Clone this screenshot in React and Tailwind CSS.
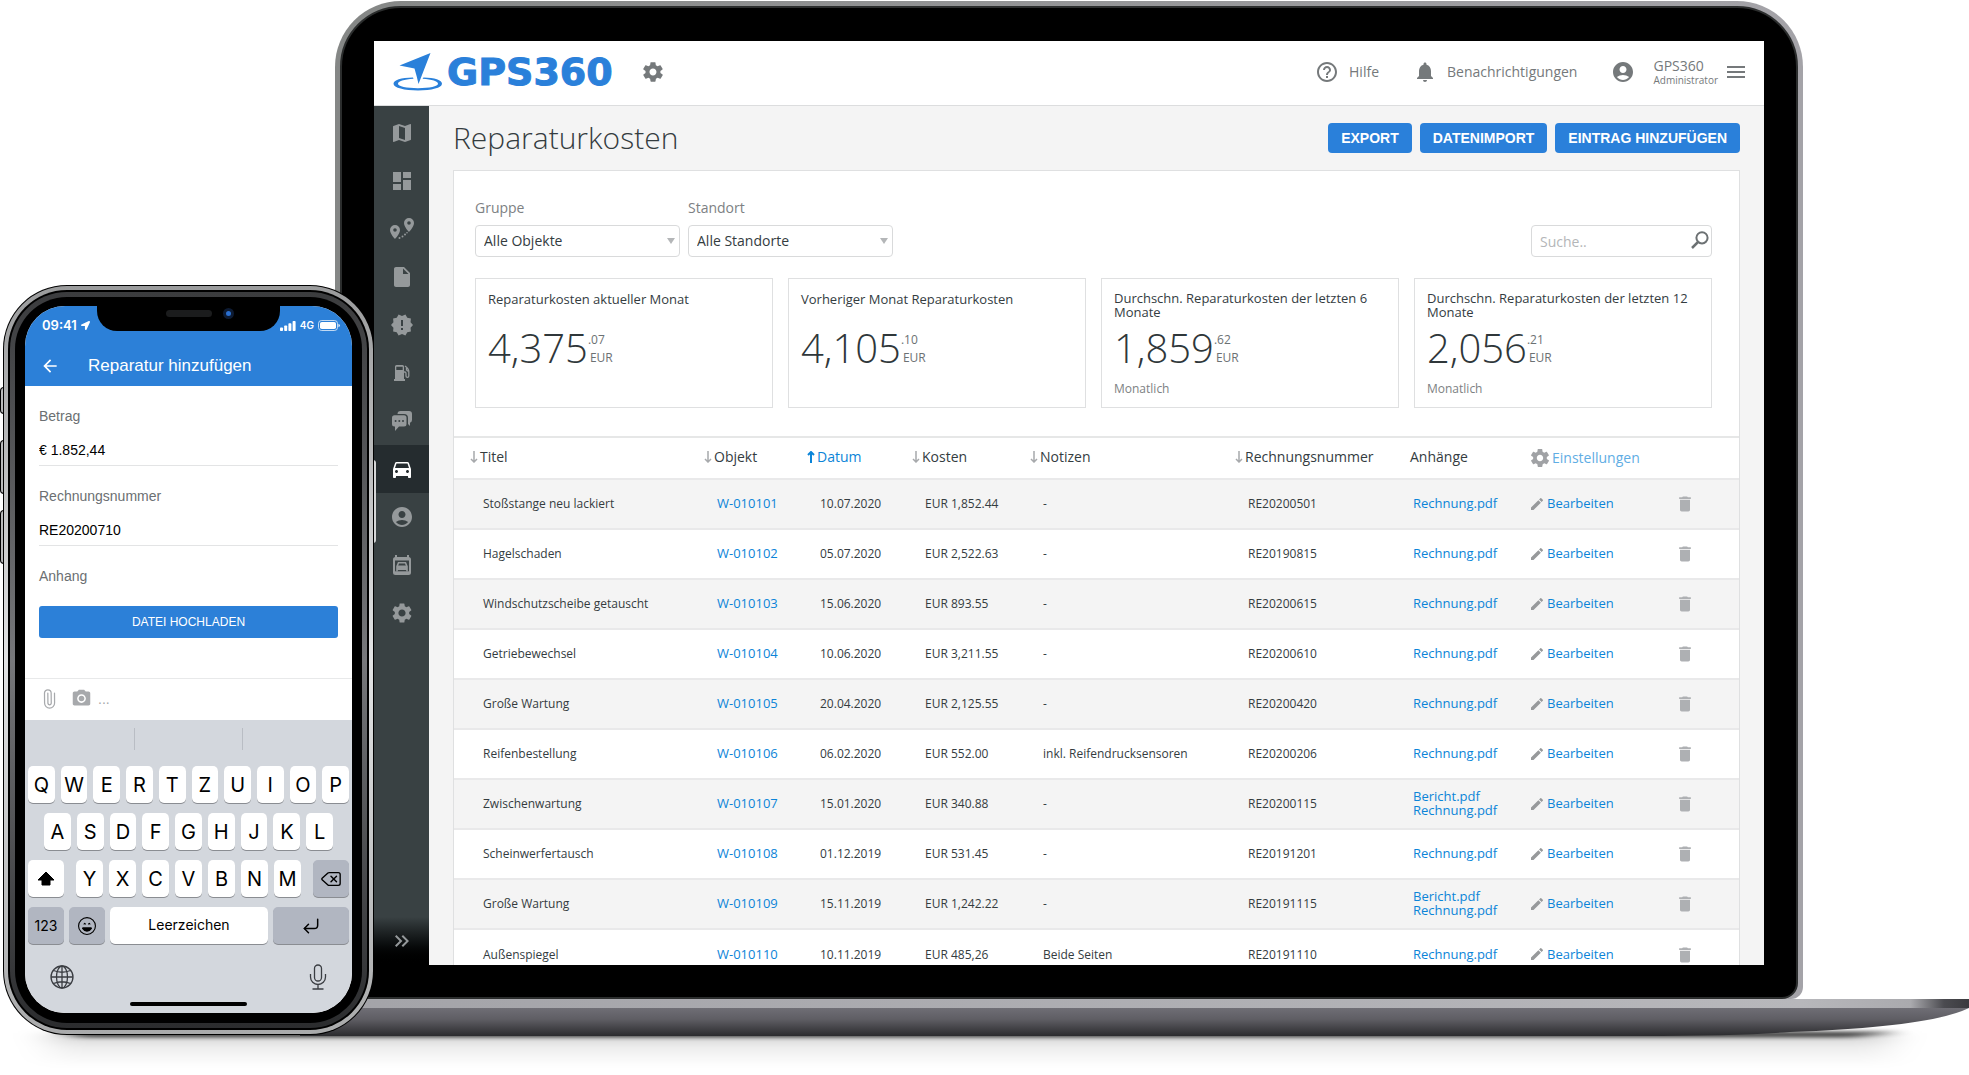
import React, { useState } from 'react'
import {
    MdAccountCircle,
    MdArrowBack,
    MdCameraAlt,
    MdDashboard,
    MdDelete,
    MdDirectionsCar,
    MdEdit,
    MdHelpOutline,
    MdInsertDriveFile,
    MdKeyboardDoubleArrowRight,
    MdMap,
    MdMenu,
    MdNewReleases,
    MdNotifications,
    MdSettings
} from 'react-icons/md'
import { IoMdSettings } from 'react-icons/io'
import { FaLocationArrow } from 'react-icons/fa'
import { BsEmojiLaughing } from 'react-icons/bs'
import { CornerDownLeft, Delete, Paperclip } from 'lucide-react'

const RouteIcon = () => (
    <svg viewBox="0 0 24 22" className="h-[22px] w-6" fill="currentColor">
        <path fillRule="evenodd" d="M5 7a5 5 0 0 1 5 5c0 3.700-5 9-5 9s-5-5.300-5-9a5 5 0 0 1 5-5zm0 3.200a1.800 1.800 0 1 0 0 3.600 1.800 1.800 0 0 0 0-3.600z" />
        <path fillRule="evenodd" d="M19 0a5 5 0 0 1 5 5c0 3.700-5 9-5 9s-5-5.300-5-9a5 5 0 0 1 5-5zm0 3.200a1.800 1.800 0 1 0 0 3.600 1.800 1.800 0 0 0 0-3.600z" />
        <circle cx="9.500" cy="20" r="1" />
        <circle cx="12.500" cy="18.500" r="1" />
        <circle cx="15" cy="16.500" r="1" />
        <circle cx="17" cy="14.800" r=".8" />
    </svg>
)

const FuelIcon = () => (
    <svg viewBox="0 0 16 16" className="size-4" fill="none" stroke="currentColor">
        <path fill="currentColor" stroke="none" fillRule="evenodd" d="M1 1.500A1.500 1.500 0 0 1 2.500 0h6A1.500 1.500 0 0 1 10 1.500V14h1v2H0v-2h1zM2.300 1.700V5h6.400V1.700z" />
        <path strokeWidth="1.300" d="M10 7h.8q1.200 0 1.200 1.200V11a1.400 1.400 0 0 0 2.800 0V6.500Q14.800 4 11 1" />
        <path strokeWidth="1.300" d="M12.500 2.800V5l2 1.500" />
    </svg>
)

const ChatIcon = () => (
    <svg viewBox="0 0 20 20" className="size-5" fill="currentColor">
        <path d="M5.500 3a3 3 0 0 1 3-3H17a3 3 0 0 1 3 3v6a3 3 0 0 1-2 2.800V15l-2-2V7a4 4 0 0 0-4-4z" />
        <path fillRule="evenodd" d="M2.500 4.200h9.500A2.500 2.500 0 0 1 14.500 6.700v6.300a2.500 2.500 0 0 1-2.500 2.500H7L3 20v-4.500h-.5A2.500 2.500 0 0 1 0 13V6.700a2.500 2.500 0 0 1 2.500-2.500zM3.600 9a1 1 0 1 0 0 2 1 1 0 0 0 0-2zm3.700 0a1 1 0 1 0 0 2 1 1 0 0 0 0-2zM11 9a1 1 0 1 0 0 2 1 1 0 0 0 0-2z" />
    </svg>
)

const ServiceIcon = () => (
    <svg viewBox="0 0 18 20" className="h-5 w-[18px]" fill="none" stroke="currentColor" strokeWidth="2">
        <path d="M3 0v4M15 0v4" />
        <rect x="1" y="3" width="16" height="16" rx="1.500" />
        <path strokeWidth="3" d="M2 4h14" />
        <path strokeWidth="3" d="M2 17.800h14" />
        <path strokeWidth="1.600" d="M4 16.500v-5L5.500 7.800h7L14 11.500v5" />
        <path fill="currentColor" stroke="none" d="M4 10.500h10V15H4z" />
    </svg>
)

const SearchIcon = () => (
    <svg viewBox="0 0 18 18" className="size-[18px]" fill="none" stroke="currentColor" strokeWidth="2">
        <circle cx="11" cy="6.800" r="5.600" />
        <path d="M7 11L1 17" strokeWidth="2.500" />
    </svg>
)

const SortIcon = ({ up }) => (
    <svg viewBox="0 0 8 12" className={up ? 'h-3 w-2 rotate-180 text-[#0b84d8]' : 'h-3 w-2 text-[#a7a9ac]'} fill="none" stroke="currentColor" strokeWidth={up ? 2 : 1.5}>
        <path d="M4 0v11M1 8l3 3 3-3" />
    </svg>
)

const GlobeIcon = () => (
    <svg viewBox="0 0 24 24" className="size-6" fill="none" stroke="currentColor" strokeWidth="1.300">
        <circle cx="12" cy="12" r="11" />
        <ellipse cx="12" cy="12" rx="5.500" ry="11" />
        <path d="M12 1v22M1 12h22M3.500 5.500Q12 9 20.500 5.500M3.500 18.500Q12 15 20.500 18.500" />
    </svg>
)

const MicIcon = () => (
    <svg viewBox="0 0 18 26" className="h-[26px] w-[18px]" fill="none" stroke="currentColor" strokeWidth="1.300">
        <rect x="5.500" y="1" width="7" height="16" rx="3.500" />
        <path d="M1.500 10v3a7.500 7.500 0 0 0 15 0v-3M9 20.500V25M3.500 25h11" />
    </svg>
)

const ShiftIcon = () => (
    <svg viewBox="0 0 18 15" className="h-[15px] w-[18px]" fill="currentColor" stroke="currentColor" strokeLinejoin="round">
        <path d="M9 1l8 8h-4v5H5V9H1z" />
    </svg>
)

const Logo = () => (
    <a href="#" className="flex items-center gap-1 text-[#2a80da]">
        <svg viewBox="0 0 50 38" className="h-[38px] w-[50px]" fill="currentColor">
            <path d="M37.500 0L25.500 31Q24 24 21.500 15.500L6.500 12.500z" />
            <path d="M20.500 25.800C11 26.300 5 28.400 5 30.800c0 2.800 8.500 4.400 20 4.400s20-1.600 20-4.400c0-2.400-6-4.500-15.500-5l1-1.300C41.500 24.800 49 27 49 30.800c0 4-10.500 6.700-24 6.700S.5 34.800.5 30.800c0-3.800 7.500-6 19.500-6.300z" />
        </svg>
        <span className="font-['DejaVu_Sans',sans-serif] text-[38px] leading-9 font-bold [-webkit-text-stroke:1px_#2a80da]">GPS360</span>
    </a>
)

const menu = [
    { name: 'Karte', icon: <MdMap className="size-6" /> },
    { name: 'Dashboard', icon: <MdDashboard className="size-6" /> },
    { name: 'Routen', icon: <RouteIcon /> },
    { name: 'Berichte', icon: <MdInsertDriveFile className="size-6" /> },
    { name: 'Ereignisse', icon: <MdNewReleases className="size-6" /> },
    { name: 'Kraftstoff', icon: <FuelIcon /> },
    { name: 'Nachrichten', icon: <ChatIcon /> },
    { name: 'Fahrzeuge', icon: <MdDirectionsCar className="size-6" />, active: true },
    { name: 'Fahrer', icon: <MdAccountCircle className="size-6" /> },
    { name: 'Service', icon: <ServiceIcon /> },
    { name: 'Einstellungen', icon: <MdSettings className="size-6" /> }
]

const stats = [
    { title: 'Reparaturkosten aktueller Monat', value: '4,375', cents: '.07' },
    { title: 'Vorheriger Monat Reparaturkosten', value: '4,105', cents: '.10' },
    { title: 'Durchschn. Reparaturkosten der letzten 6 Monate', value: '1,859', cents: '.62', note: 'Monatlich' },
    { title: 'Durchschn. Reparaturkosten der letzten 12 Monate', value: '2,056', cents: '.21', note: 'Monatlich' }
]

const repairs = [
    { titel: 'Stoßstange neu lackiert', objekt: 'W-010101', datum: '10.07.2020', kosten: 'EUR 1,852.44', notizen: '-', nummer: 'RE20200501', files: ['Rechnung.pdf'] },
    { titel: 'Hagelschaden', objekt: 'W-010102', datum: '05.07.2020', kosten: 'EUR 2,522.63', notizen: '-', nummer: 'RE20190815', files: ['Rechnung.pdf'] },
    { titel: 'Windschutzscheibe getauscht', objekt: 'W-010103', datum: '15.06.2020', kosten: 'EUR 893.55', notizen: '-', nummer: 'RE20200615', files: ['Rechnung.pdf'] },
    { titel: 'Getriebewechsel', objekt: 'W-010104', datum: '10.06.2020', kosten: 'EUR 3,211.55', notizen: '-', nummer: 'RE20200610', files: ['Rechnung.pdf'] },
    { titel: 'Große Wartung', objekt: 'W-010105', datum: '20.04.2020', kosten: 'EUR 2,125.55', notizen: '-', nummer: 'RE20200420', files: ['Rechnung.pdf'] },
    { titel: 'Reifenbestellung', objekt: 'W-010106', datum: '06.02.2020', kosten: 'EUR 552.00', notizen: 'inkl. Reifendrucksensoren', nummer: 'RE20200206', files: ['Rechnung.pdf'] },
    { titel: 'Zwischenwartung', objekt: 'W-010107', datum: '15.01.2020', kosten: 'EUR 340.88', notizen: '-', nummer: 'RE20200115', files: ['Bericht.pdf', 'Rechnung.pdf'] },
    { titel: 'Scheinwerfertausch', objekt: 'W-010108', datum: '01.12.2019', kosten: 'EUR 531.45', notizen: '-', nummer: 'RE20191201', files: ['Rechnung.pdf'] },
    { titel: 'Große Wartung', objekt: 'W-010109', datum: '15.11.2019', kosten: 'EUR 1,242.22', notizen: '-', nummer: 'RE20191115', files: ['Bericht.pdf', 'Rechnung.pdf'] },
    { titel: 'Außenspiegel', objekt: 'W-010110', datum: '10.11.2019', kosten: 'EUR 485,26', notizen: 'Beide Seiten', nummer: 'RE20191110', files: ['Rechnung.pdf'] }
]

const Header = () => (
    <header className="flex h-[65px] shrink-0 items-center border-b border-[#dcddde] bg-white pr-4 pb-0.5 pl-[19px] text-sm text-[#75797b]">
        <Logo />
        <button type="button" aria-label="Optionen" className="ml-7">
            <IoMdSettings className="size-6" />
        </button>
        <a href="#" className="ml-auto flex items-center gap-2.5">
            <MdHelpOutline className="size-6" />
            Hilfe
        </a>
        <a href="#" className="ml-[34px] flex items-center gap-2.5">
            <MdNotifications className="size-6" />
            Benachrichtigungen
        </a>
        <div className="ml-[34px] flex items-center gap-[18px]">
            <MdAccountCircle className="size-6" />
            <div>
                <p className="leading-4">GPS360</p>
                <p className="text-[10px] leading-3 font-medium">Administrator</p>
            </div>
        </div>
        <button type="button" aria-label="Menü" className="ml-1.5">
            <MdMenu className="size-6" />
        </button>
    </header>
)

const Sidebar = () => (
    <nav className="relative flex w-[55px] shrink-0 flex-col bg-[#394143] pt-[3px] text-[#95999b]">
        {menu.map((item) => (
            <a
                key={item.name}
                href="#"
                aria-label={item.name}
                className={item.active
                    ? 'flex h-12 items-center justify-center bg-[#252c2f] text-white'
                    : 'flex h-12 items-center justify-center'}
            >
                {item.icon}
            </a>
        ))}
        <button type="button" aria-label="Ausklappen" className="mt-auto flex h-12 items-center justify-center bg-linear-to-b from-[#394143] to-black">
            <MdKeyboardDoubleArrowRight className="size-6" />
        </button>
    </nav>
)

const Filter = ({ id, label, option }) => (
    <div>
        <label htmlFor={id} className="block text-sm leading-5 text-[#7d8183]">{label}</label>
        <div className="relative mt-[7px]">
            <select id={id} className="h-8 w-[205px] appearance-none rounded-sm border border-[#d9dadb] bg-white px-2 text-sm font-medium text-[#343c3f]">
                <option>{option}</option>
            </select>
            <svg viewBox="0 0 8 6" className="pointer-events-none absolute top-[13px] right-[5px] h-1.5 w-2" fill="#b4b6b8">
                <path d="M0 0h8L4 6z" />
            </svg>
        </div>
    </div>
)

const StatCard = ({ title, value, cents, note }) => (
    <div className="h-[130px] border border-[#dfe0e1] px-3 pt-3">
        <h2 className="h-[30px] text-[13px] leading-[14px]">
            <span className={note ? 'block' : 'block pt-px'}>{title}</span>
        </h2>
        <div className="mt-1 flex text-[#2f373a]">
            <span className="text-[40px] leading-[46px] font-light">{value}</span>
            <span className="flex flex-col pt-1.5 text-xs leading-[18px] text-[#6c7173]">
                <span>{cents}</span>
                <span className="pl-0.5">EUR</span>
            </span>
        </div>
        {note && <p className="mt-2.5 text-xs leading-4 font-medium text-[#7d8183]">{note}</p>}
    </div>
)

const SortHead = ({ children, up }) => (
    <th className="p-0 pb-[3px] font-medium">
        <button type="button" className={up ? 'flex items-center gap-0.5 text-[#0b84d8]' : 'flex items-center gap-0.5'}>
            <SortIcon up={up} />
            {children}
        </button>
    </th>
)

const RepairTable = () => (
    <table className="w-full table-fixed border-t-2 border-[#e6e7e7] text-left text-xs font-medium">
        <colgroup>
            <col className="w-[16px]" />
            <col className="w-[234px]" />
            <col className="w-[103px]" />
            <col className="w-[105px]" />
            <col className="w-[118px]" />
            <col className="w-[205px]" />
            <col className="w-[165px]" />
            <col className="w-[129px]" />
            <col className="w-[141px]" />
            <col className="w-[69px]" />
        </colgroup>
        <thead>
            <tr className="h-[42px] text-sm">
                <td />
                <SortHead>Titel</SortHead>
                <SortHead>Objekt</SortHead>
                <SortHead up>Datum</SortHead>
                <SortHead>Kosten</SortHead>
                <SortHead>Notizen</SortHead>
                <SortHead>Rechnungsnummer</SortHead>
                <th className="pb-[3px] pl-2.5 font-medium">Anhänge</th>
                <th className="p-0 font-normal">
                    <a href="#" className="flex items-center gap-px text-[#5fade4]">
                        <IoMdSettings className="size-[22px] text-[#a0a2a5]" />
                        Einstellungen
                    </a>
                </th>
                <td />
            </tr>
        </thead>
        <tbody>
            {repairs.map((row) => (
                <tr key={row.objekt} className="h-[50px] border-t-2 border-[#e9e9ea] odd:bg-[#f4f4f4]">
                    <td />
                    <td className="pl-[13px]">{row.titel}</td>
                    <td className="pl-[13px] text-[13px]"><a href="#" className="text-[#0b84d8]">{row.objekt}</a></td>
                    <td className="pl-[13px]">{row.datum}</td>
                    <td className="pl-[13px]">{row.kosten}</td>
                    <td className="pl-[13px]">{row.notizen}</td>
                    <td className="pl-[13px]">{row.nummer}</td>
                    <td className="pb-0.5 pl-[13px] text-[13px] leading-[14px]">
                        {row.files.map((file) => (
                            <a key={file} href="#" className="block text-[#0b84d8]">{file}</a>
                        ))}
                    </td>
                    <td className="text-[13px]">
                        <a href="#" className="flex items-center gap-0.5 text-[#0b84d8]">
                            <MdEdit className="size-4 text-[#97999b]" />
                            Bearbeiten
                        </a>
                    </td>
                    <td>
                        <button type="button" aria-label="Löschen" className="flex pl-[5px] text-[#aeb0b3]">
                            <MdDelete className="size-5" />
                        </button>
                    </td>
                </tr>
            ))}
        </tbody>
    </table>
)

const Dashboard = () => {
    const [search, setSearch] = useState('')

    return (
        <div className="flex min-h-0 flex-1 flex-col overflow-hidden bg-[#f4f4f4] font-['Open_Sans',sans-serif] text-[#343c3f]">
            <Header />
            <div className="flex min-h-0 flex-1">
                <Sidebar />
                <main className="min-w-0 flex-1 overflow-hidden px-6">
                    <div className="flex h-16 items-center justify-between">
                        <h1 className="text-3xl font-light">Reparaturkosten</h1>
                        <div className="flex gap-2 font-['Liberation_Sans',sans-serif] text-sm font-bold text-white">
                            <button type="button" className="h-[30px] rounded-sm bg-[#2a80da] px-[13px]">EXPORT</button>
                            <button type="button" className="h-[30px] rounded-sm bg-[#2a80da] px-[13px]">DATENIMPORT</button>
                            <button type="button" className="h-[30px] rounded-sm bg-[#2a80da] px-[13px]">EINTRAG HINZUFÜGEN</button>
                        </div>
                    </div>

                    <section className="border border-[#dfe0e1] bg-white">
                        <div className="flex items-end gap-2 px-[21px] pt-[27px]">
                            <Filter id="gruppe" label="Gruppe" option="Alle Objekte" />
                            <Filter id="standort" label="Standort" option="Alle Standorte" />
                            <label className="relative mr-1.5 ml-auto">
                                <input
                                    type="text"
                                    aria-label="Suche"
                                    placeholder="Suche.."
                                    value={search}
                                    onChange={(e) => setSearch(e.target.value)}
                                    className="block h-8 w-[181px] rounded-sm border border-[#d9dadb] px-2 text-sm placeholder:text-[#b4b6b8]"
                                />
                                <span className="absolute top-[6px] right-[3px] text-[#6c7173]"><SearchIcon /></span>
                            </label>
                        </div>
                        <div className="grid grid-cols-4 gap-[15px] pt-[21px] pr-[27px] pb-7 pl-[21px]">
                            {stats.map((stat) => <StatCard key={stat.title} {...stat} />)}
                        </div>
                        <RepairTable />
                    </section>
                </main>
            </div>
        </div>
    )
}

const LaptopBase = () => (
    <svg viewBox="0 0 1969 76" preserveAspectRatio="none" className="h-[76px] w-full shrink-0">
        <defs>
            <linearGradient id="edge" x1="0" x2="1">
                <stop offset="0" stopColor="#a3a3a8" />
                <stop offset=".9" stopColor="#b7b7bb" />
                <stop offset=".965" stopColor="#aaaaae" />
                <stop offset=".985" stopColor="#4b4b50" />
                <stop offset="1" stopColor="#3a3a3e" />
            </linearGradient>
            <linearGradient id="body" x1="0" x2="0" y1="0" y2="1">
                <stop offset="0" stopColor="#6f6e75" />
                <stop offset=".4" stopColor="#5f5e64" />
                <stop offset="1" stopColor="#2b2b2e" />
            </linearGradient>
            <linearGradient id="shade" x1="0" x2="0" y1="0" y2="1">
                <stop offset="0" stopColor="#000" stopOpacity=".2" />
                <stop offset=".4" stopColor="#000" stopOpacity=".07" />
                <stop offset="1" stopColor="#000" stopOpacity="0" />
            </linearGradient>
            <filter id="soft" x="-5%" width="110%" y="-100%" height="300%">
                <feGaussianBlur stdDeviation="10 2" />
            </filter>
            <filter id="wide" x="-5%" width="110%" y="-50%" height="200%">
                <feGaussianBlur stdDeviation="18 3" />
            </filter>
        </defs>
        <path d="M50 34H1890V68H50z" fill="url(#shade)" filter="url(#wide)" />
        <path d="M60 33H1900L1850 38H80z" fill="#000" opacity=".8" filter="url(#soft)" />
        <path d="M300 9H1969Q1930 28 1790 33Q1740 37 1640 37H300z" fill="url(#body)" />
        <path d="M300 0H1969V9H300z" fill="url(#edge)" />
    </svg>
)

const Laptop = () => (
    <div className="flex h-full flex-col pt-px">
        <div className="mr-[166px] ml-[335px] flex min-h-0 flex-1 flex-col rounded-t-[66px] rounded-b-xl bg-linear-to-r from-[#858786] to-[#a4a3a8] px-[5px] pt-[5px]">
            <div className="flex min-h-0 flex-1 flex-col rounded-t-[61px] rounded-b-2xl border-2 border-[#2b2d2d] bg-black px-8 pt-[33px] pb-8">
                <Dashboard />
            </div>
        </div>
        <LaptopBase />
    </div>
)

const Key = ({ children }) => (
    <button type="button" className="flex h-[37px] min-w-0 flex-1 items-center justify-center rounded-[5px] bg-white text-xl shadow-[0_1px_0_#8a8d92]">
        {children}
    </button>
)

const Keyboard = () => (
    <div className="flex flex-1 flex-col bg-[#d3d7dd] px-[3px] font-['Inter',sans-serif] text-black">
        <div className="flex h-[46px] pt-2 pb-4">
            <span className="flex-1 border-r border-[#b9bdc4]" />
            <span className="flex-1 border-r border-[#b9bdc4]" />
            <span className="flex-1" />
        </div>
        <div className="flex flex-col gap-[10px]">
            <div className="flex gap-[6px]">
                {[...'QWERTZUIOP'].map((letter) => <Key key={letter}>{letter}</Key>)}
            </div>
            <div className="flex gap-[6px] px-4">
                {[...'ASDFGHJKL'].map((letter) => <Key key={letter}>{letter}</Key>)}
            </div>
            <div className="flex gap-3">
                <button type="button" aria-label="Umschalten" className="flex h-[37px] w-9 items-center justify-center rounded-[5px] bg-white shadow-[0_1px_0_#8a8d92]">
                    <ShiftIcon />
                </button>
                <div className="flex flex-1 gap-[6px]">
                    {[...'YXCVBNM'].map((letter) => <Key key={letter}>{letter}</Key>)}
                </div>
                <button type="button" aria-label="Löschen" className="flex h-[37px] w-9 items-center justify-center rounded-[5px] bg-[#b1b6c1] shadow-[0_1px_0_#8a8d92]">
                    <Delete className="size-[22px]" strokeWidth={1.5} />
                </button>
            </div>
            <div className="flex gap-[5px]">
                <button type="button" className="h-[37px] w-9 rounded-[5px] bg-[#b1b6c1] text-sm shadow-[0_1px_0_#8a8d92]">123</button>
                <button type="button" aria-label="Emoji" className="flex h-[37px] w-9 items-center justify-center rounded-[5px] bg-[#b1b6c1] shadow-[0_1px_0_#8a8d92]">
                    <BsEmojiLaughing className="size-[18px]" />
                </button>
                <button type="button" className="h-[37px] flex-1 rounded-[5px] bg-white pb-0.5 text-sm shadow-[0_1px_0_#8a8d92]">Leerzeichen</button>
                <button type="button" aria-label="Eingabe" className="flex h-[37px] w-[76px] items-center justify-center rounded-[5px] bg-[#b1b6c1] shadow-[0_1px_0_#8a8d92]">
                    <CornerDownLeft className="size-5" strokeWidth={1.8} />
                </button>
            </div>
        </div>
        <div className="flex items-center justify-between px-[22px] pt-5 text-[#3a3d42]">
            <GlobeIcon />
            <MicIcon />
        </div>
        <div className="mx-auto mt-auto mb-[7px] h-1 w-[117px] rounded-full bg-black" />
    </div>
)

const PhoneScreen = () => {
    const [betrag, setBetrag] = useState('€ 1.852,44')
    const [nummer, setNummer] = useState('RE20200710')

    return (
        <div className="relative flex h-full flex-col overflow-hidden rounded-[40px] bg-white font-['Liberation_Sans',sans-serif]">
            {/* Notch */}
            <div className="absolute top-0 left-[72px] h-[25px] w-[183px] rounded-b-[20px] bg-black">
                <span className="absolute top-1 left-[69px] h-[7px] w-[46px] rounded-full bg-[#1b1c1d]" />
                <span className="absolute top-0.5 left-[126px] size-[11px] rounded-full border-3 border-[#0d1b33] bg-[#2a6fd0]" />
            </div>

            <div className="bg-[#2c80d8] text-white">
                <div className="flex h-[39px] items-center justify-between pr-3 pl-[17px] font-['Inter',sans-serif] text-[13px] font-semibold">
                    <span className="flex items-center gap-1">
                        09:41
                        <FaLocationArrow className="size-[9px]" />
                    </span>
                    <span className="flex items-center gap-1 text-[10px]">
                        <svg viewBox="0 0 16 10" className="h-2.5 w-4" fill="currentColor">
                            <rect x="0" y="6.500" width="3" height="3.500" rx=".8" />
                            <rect x="4.200" y="4.500" width="3" height="5.500" rx=".8" />
                            <rect x="8.400" y="2.300" width="3" height="7.700" rx=".8" />
                            <rect x="12.600" y="0" width="3" height="10" rx=".8" />
                        </svg>
                        4G
                        <svg viewBox="0 0 22 11" className="h-[11px] w-[22px]" fill="currentColor">
                            <rect x=".5" y=".5" width="19" height="10" rx="3" fill="none" stroke="currentColor" strokeOpacity=".7" />
                            <rect x="2" y="2" width="16" height="7" rx="1.800" />
                            <path d="M20.500 3.800q1.300.4 1.300 1.700t-1.300 1.700z" />
                        </svg>
                    </span>
                </div>
                <div className="flex h-[41px] items-center gap-7 pl-[15px]">
                    <button type="button" aria-label="Zurück"><MdArrowBack className="size-5" /></button>
                    <h2 className="text-[17px]">Reparatur hinzufügen</h2>
                </div>
            </div>

            <form className="px-3.5 pt-5 text-sm">
                <label htmlFor="betrag" className="block leading-5 text-[#6b6f72]">Betrag</label>
                <input
                    id="betrag"
                    type="text"
                    value={betrag}
                    onChange={(e) => setBetrag(e.target.value)}
                    className="mt-2 block h-8 w-full border-b border-[#e3e4e5] text-black outline-none"
                />
                <label htmlFor="nummer" className="mt-5 block leading-5 text-[#6b6f72]">Rechnungsnummer</label>
                <input
                    id="nummer"
                    type="text"
                    value={nummer}
                    onChange={(e) => setNummer(e.target.value)}
                    className="mt-2 block h-8 w-full border-b border-[#e3e4e5] text-black outline-none"
                />
                <p className="mt-5 leading-5 text-[#6b6f72]">Anhang</p>
                <button type="button" className="mt-5 h-8 w-full rounded-[3px] bg-[#2c80d8] text-xs text-white">DATEI HOCHLADEN</button>
            </form>

            <div className="mt-10 flex h-[42px] items-center gap-1.5 border-t border-[#e8e9ea] pb-0.5 pl-3.5 text-[#a7a9ac]">
                <Paperclip className="mr-1.5 size-5 -rotate-45" strokeWidth={1.5} />
                <MdCameraAlt className="size-[21px]" />
                <span className="text-sm">...</span>
            </div>
            <Keyboard />
        </div>
    )
}

const Phone = () => (
    <div className="absolute top-[285px] left-[3px] h-[750px] w-[371px]">
        {/* Side buttons */}
        <span className="absolute top-[102px] -left-[3px] h-[27px] w-1 rounded-l-sm border border-black bg-[#b9babb]" />
        <span className="absolute top-[155px] -left-[3px] h-[54px] w-1 rounded-l-sm border border-black bg-[#b9babb]" />
        <span className="absolute top-[225px] -left-[3px] h-[54px] w-1 rounded-l-sm border border-black bg-[#b9babb]" />
        <span className="absolute top-[175px] -right-[2px] h-[83px] w-[3px] rounded-r-sm bg-[#d5d6d7]" />

        <div className="relative h-full rounded-[64px] bg-black p-px">
            <div className="h-full rounded-[63px] bg-linear-to-b from-[#9a9b9c] via-[#e2e3e4] to-[#a9aaab] p-1">
                <div className="h-full rounded-[59px] bg-black p-0.5">
                    <div className="h-full rounded-[57px] bg-linear-to-b from-[#3b3c3e] via-[#77787b] to-[#2b2c2e] p-[5px]">
                        <div className="h-full rounded-[52px] bg-black px-[10px] pt-[9px] pb-[10px]">
                            <PhoneScreen />
                        </div>
                    </div>
                </div>
            </div>
        </div>
    </div>
)

const App = () => {
    return (
        <div className="relative h-screen overflow-hidden bg-white">
            <Laptop />
            <Phone />
        </div>
    )
}

export default App
